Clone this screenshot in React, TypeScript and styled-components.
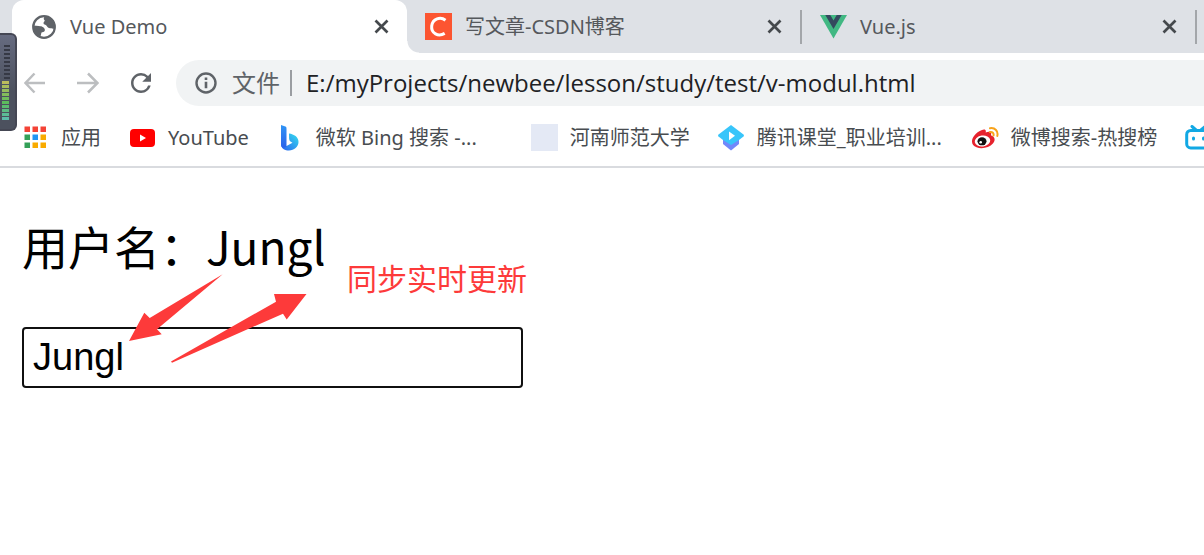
import React, { useState } from "react";
import styled, { createGlobalStyle, css } from "styled-components";
import { MdRefresh } from "react-icons/md";

const uiFont = '"Noto Sans", "Noto Sans CJK SC", sans-serif';
const cjkFont = '"Noto Sans CJK SC", sans-serif';

const GlobalStyle = createGlobalStyle`
  *, *::before, *::after { box-sizing: border-box; }
  body { margin: 0; background: #fff; color: #000; font-family: ${uiFont}; overflow: hidden; }
  button { border: 0; padding: 0; background: none; color: inherit; font: inherit; }
`;

const Browser = styled.div`
  position: relative;
  min-height: 100vh;
`;

const TabStrip = styled.header`
  display: flex;
  height: 53px;
  padding-left: 12px;
  background: #dee1e6;
`;

const Tab = styled.div<{ $active?: boolean }>`
  position: relative;
  flex: 1;
  min-width: 0;
  max-width: ${(p) => (p.$active ? "395px" : "393px")};
  display: flex;
  align-items: center;
  gap: 13px;
  padding: 0 18px;
  color: #55585c;
  ${(p) =>
    p.$active &&
    css`
      background: #fff;
      border-radius: 12px 12px 0 0;
      &::after {
        content: "";
        position: absolute;
        left: 100%;
        bottom: 0;
        width: 12px;
        height: 12px;
        background: radial-gradient(circle at 100% 0, transparent 11px, #fff 12px);
      }
    `}
`;

const TabTitle = styled.span`
  flex: 1;
  font-size: 20px;
  line-height: 28px;
  white-space: nowrap;
`;

const CloseButton = styled.button`
  display: flex;
  color: #45494d;
`;

const Divider = styled.span`
  align-self: center;
  width: 2px;
  height: 34px;
  background: #a3a6aa;
`;

const Toolbar = styled.nav`
  display: flex;
  align-items: center;
  height: 60px;
  padding-left: 20px;
`;

const NavButton = styled.button<{ $dim?: boolean }>`
  display: flex;
  justify-content: center;
  width: 30px;
  margin-right: 23px;
  color: ${(p) => (p.$dim ? "#bcbec0" : "#5f6368")};
`;

const Omnibox = styled.div`
  flex: 1;
  display: flex;
  align-items: center;
  height: 46px;
  margin-left: -3px;
  padding-left: 17px;
  border-radius: 23px 0 0 23px;
  background: #f1f3f4;
  color: #5f6368;
`;

const Scheme = styled.label`
  margin-left: 13px;
  padding-right: 10px;
  border-right: 2px solid #9a9da1;
  font-size: 24px;
  line-height: 26px;
`;

const Address = styled.input`
  flex: 1;
  min-width: 0;
  margin-left: 14px;
  padding: 0;
  border: 0;
  outline: 0;
  background: transparent;
  color: #202124;
  font: 24px/32px "Open Sans", ${uiFont};
`;

const Bookmarks = styled.nav`
  display: flex;
  align-items: center;
  gap: 28px;
  height: 55px;
  padding: 0 0 4px 22px;
  border-bottom: 2px solid #d9dbdf;
  overflow: hidden;
`;

const Bookmark = styled.a`
  display: flex;
  flex: none;
  align-items: center;
  gap: 12px;
  color: #484c50;
  font-size: 20px;
  line-height: 28px;
  white-space: nowrap;
  text-decoration: none;
`;

const BookmarkLabel = styled.span<{ $wide?: boolean }>`
  ${(p) => p.$wide && "width: 187px;"}
`;

const IconSlot = styled.span`
  display: flex;
  flex: none;
  justify-content: center;
  width: 27px;
`;

const BlankIcon = styled.span`
  width: 27px;
  height: 27px;
  background: #e4e9f5;
`;

const Page = styled.main`
  position: relative;
  padding: 43px 22px;
`;

const UserLine = styled.label`
  display: block;
  font: 46px/68px ${cjkFont};
`;

const UserInput = styled.input`
  display: block;
  width: 501px;
  max-width: 100%;
  height: 61px;
  margin-top: 48px;
  padding: 0 9px;
  border: 2px solid #101010;
  border-radius: 4px;
  outline: 0;
  color: #000;
  font: 38px "Liberation Sans", Arial, sans-serif;
`;

const Note = styled.span`
  position: absolute;
  left: 347px;
  top: 87px;
  color: #fd3a3a;
  font: 30px/44px ${cjkFont};
`;

const Arrows = styled.svg`
  position: absolute;
  left: 120px;
  top: 102px;
  pointer-events: none;
`;

const Meter = styled.aside`
  position: absolute;
  left: 0;
  top: 33px;
  width: 17px;
  height: 98px;
  border: solid #454754;
  border-width: 2px 2px 2px 0;
  border-radius: 0 6px 6px 0;
  background: linear-gradient(#666b80, #4c515e 60%);
`;

const levels = Array.from({ length: 19 }, (_, i) => i);

const MeterBars = () => (
  <svg width="15" height="94" viewBox="0 0 15 94">
    {levels.map((i) => (
      <rect
        key={i}
        x={i < 9 ? 4 : 2}
        y={10 + i * 4}
        width={i < 9 ? 6 : 7}
        height={i < 9 ? 2 : 3}
        fill={i < 9 ? "#363945" : `hsl(${60 + (i - 9) * 12}, 42%, 55%)`}
      />
    ))}
  </svg>
);

const Globe = () => (
  <svg width="24" height="24" viewBox="0 0 24 24">
    <circle cx="12" cy="12" r="10.8" fill="#fff" stroke="#5f6368" strokeWidth="2.2" />
    <path
      fill="#5f6368"
      d="M13 1.200c-1.500 1.300-1.600 3-.4 4 .8.700-1.300 1.500-1.100 3 .2 1.600 2.200 1.200 3.100 2.600.9 1.500 1.900 2.600 3.700 2.500 1.700-.1 2.500.8 4.800.4C23.800 7 19.500 1.200 13 1.200zM1.300 10.600l5.600.4c3.300.2 6 1.600 6 4 0 1.700-1.500 2-2.700 2.200-1.200.2-.9 1.500-1.200 2.600-.3 1.100-.5 1.700-1.500 1.800C3.600 19.600 1.300 15.800 1.300 10.600z"
    />
  </svg>
);

const CsdnIcon = () => (
  <svg width="27" height="27" viewBox="0 0 27 27">
    <path fill="#fc5531" d="M0 0h27v27H0z" />
    <path d="M20.500 7.200C15.500 3.500 7.600 5.500 6.700 13c-.8 7.500 6.600 11 13 7.400" fill="none" stroke="#fff" strokeWidth="3" />
  </svg>
);

const VueIcon = () => (
  <svg width="27" height="24" viewBox="0 0 27 24">
    <path fill="#41b883" d="M0 0h27L13.500 23.500z" />
    <path fill="#34495e" d="M5.300 0h5l3.200 5.500L16.700 0h5l-8.200 14z" />
  </svg>
);

const CloseIcon = () => (
  <svg width="15" height="15" viewBox="0 0 15 15" stroke="currentColor" strokeWidth="2.700">
    <path d="M1.500 1.500l12 12M13.500 1.500l-12 12" />
  </svg>
);

const ArrowIcon = ({ flip }: { flip?: boolean }) => (
  <svg width="22" height="22" viewBox="0 0 22 22" fill="none" stroke="currentColor" strokeWidth="2.500">
    <path d={flip ? "M0 11h20M11 1.500l9.500 9.500-9.500 9.500" : "M21 11H2M10.500 1.500L1.500 11l9 9.500"} />
  </svg>
);

const InfoIcon = () => (
  <svg width="26" height="26" viewBox="0 0 26 26" fill="none" stroke="currentColor">
    <circle cx="13" cy="13" r="9.500" strokeWidth="2.400" />
    <path d="M13 11.800v6.400M13 7.500v2.600" strokeWidth="2.600" />
  </svg>
);

const appColors = ["#f44336", "#f44336", "#f44336", "#34a058", "#2196f3", "#f9ab00", "#34a058", "#f9ab00", "#f9ab00"];

const AppsIcon = () => (
  <svg width="23" height="23" viewBox="0 0 23 23">
    {appColors.map((c, i) => (
      <rect key={i} x={(i % 3) * 8 + 0.5} y={Math.floor(i / 3) * 8 + 0.5} width="5.500" height="5.500" fill={c} />
    ))}
  </svg>
);

const YouTubeIcon = () => (
  <svg width="25" height="18" viewBox="0 0 25 18">
    <rect width="25" height="18" rx="4" fill="#f00" />
    <path fill="#fff" d="M10 5.500l6 3.500-6 3.500z" />
  </svg>
);

const BingIcon = () => (
  <svg width="18" height="26" viewBox="0 0 18 26">
    <defs>
      <linearGradient id="bingStem" x2="0" y2="1">
        <stop stopColor="#2f94f5" />
        <stop offset="1" stopColor="#2a62ea" />
      </linearGradient>
      <linearGradient id="bingBowl" y1="1" x2="1" y2="0">
        <stop stopColor="#2a62f0" />
        <stop offset="1" stopColor="#35dfee" />
      </linearGradient>
    </defs>
    <path
      fill="url(#bingBowl)"
      d="M8 8.500c5 .6 9.500 3.500 9.500 8.500 0 4.500-4.500 8.500-9.500 8.500-4 0-7.500-1.500-7.500-5l5 .5 6-3.300-2-1.200c-.8-.5-1.200-1.500-1.400-3z"
    />
    <path fill="url(#bingStem)" d="M0 0l4.300 1.600c1 .4 1.200 1 1.200 2v17.800c-2.500 2.200-5.500 1.400-5.500-1.400z" />
  </svg>
);

const TencentIcon = () => (
  <svg width="26" height="26" viewBox="0 0 26 26">
    <path fill="#7188fa" d="M5 14h16v5l-8 6.500L5 19z" />
    <path fill="#38c5fa" d="M13 0l12.500 9.500c.6.6.6 1.400 0 2L21 15l-8 5-8-5-4.500-3.500c-.6-.6-.6-1.400 0-2z" />
    <path fill="#fff" d="M11 6.500l6 4.300-6 4.400z" />
  </svg>
);

const WeiboIcon = () => (
  <svg width="27" height="22" viewBox="0 0 27 22">
    <path fill="#e6222d" d="M10 3c2-1 4.500-.7 3.700 2.400 3-1.200 6-.8 5.400 1.800-.2 1 0 1.300 1.300 1.800 2.700 1.400 3 4.600.5 7.500C17.500 20.500 10 22.500 4.500 20.300-1 18-1 13 2 9c2-3 5-5 8-6z" />
    <ellipse cx="10.500" cy="14" rx="7.800" ry="5.500" fill="#fff" transform="rotate(-8 10.500 14)" />
    <ellipse cx="10" cy="14.300" rx="4.500" ry="4" fill="#111" />
    <circle cx="8.700" cy="15.300" r="1.300" fill="#fff" />
    <path d="M18 1.200c5-.9 8.500 3 7.300 7.800M18 5c2.400-.4 4 1 3.500 3.500" fill="none" stroke="#f8a31b" strokeWidth="2" strokeLinecap="round" />
  </svg>
);

const BilibiliIcon = () => (
  <svg width="27" height="25" viewBox="0 0 27 25" fill="none" stroke="#12a8e4" strokeWidth="3" strokeLinecap="round">
    <rect x="1.700" y="5.400" width="23.600" height="17.500" rx="4" />
    <path d="M7 1.500l4 3.500M20 1.500L16 5M8.500 13v1M18.500 13v1" />
  </svg>
);

const tabs = [
  { title: "Vue Demo", icon: <Globe />, active: true },
  { title: "写文章-CSDN博客", icon: <CsdnIcon /> },
  { title: "Vue.js", icon: <VueIcon /> },
];

const bookmarks = [
  { label: "应用", icon: <AppsIcon /> },
  { label: "YouTube", icon: <YouTubeIcon /> },
  { label: "微软 Bing 搜索 -...", icon: <BingIcon />, wide: true },
  { label: "河南师范大学", icon: <BlankIcon /> },
  { label: "腾讯课堂_职业培训...", icon: <TencentIcon />, wide: true },
  { label: "微博搜索-热搜榜", icon: <WeiboIcon /> },
  { label: "", icon: <BilibiliIcon /> },
];

export default function App() {
  const [name, setName] = useState("Jungl");
  return (
    <Browser>
      <GlobalStyle />
      <TabStrip>
        {tabs.map((tab) => (
          <React.Fragment key={tab.title}>
            <Tab $active={tab.active}>
              <IconSlot>{tab.icon}</IconSlot>
              <TabTitle>{tab.title}</TabTitle>
              <CloseButton aria-label="Close tab">
                <CloseIcon />
              </CloseButton>
            </Tab>
            {!tab.active && <Divider />}
          </React.Fragment>
        ))}
      </TabStrip>
      <Toolbar>
        <NavButton $dim aria-label="Back">
          <ArrowIcon />
        </NavButton>
        <NavButton $dim aria-label="Forward">
          <ArrowIcon flip />
        </NavButton>
        <NavButton aria-label="Reload">
          <MdRefresh size={34} />
        </NavButton>
        <Omnibox>
          <InfoIcon />
          <Scheme htmlFor="address">文件</Scheme>
          <Address id="address" defaultValue="E:/myProjects/newbee/lesson/study/test/v-modul.html" />
        </Omnibox>
      </Toolbar>
      <Bookmarks>
        {bookmarks.map((b) => (
          <Bookmark href="#" key={b.label} aria-label={b.label || "bilibili"}>
            <IconSlot>{b.icon}</IconSlot>
            {b.label && <BookmarkLabel $wide={b.wide}>{b.label}</BookmarkLabel>}
          </Bookmark>
        ))}
      </Bookmarks>
      <Page>
        <UserLine htmlFor="username">用户名：{name}</UserLine>
        <UserInput id="username" value={name} onChange={(e) => setName(e.target.value)} />
        <Note>同步实时更新</Note>
        <Arrows width="190" height="96" viewBox="120 270 190 96" fill="#fd3a3a">
          <path d="M222.700 274.300L149.700 318l-5.400-5.300L129 341l32.700-6.700-4.700-5z" />
          <path d="M171 361.500L276 301.700l-2-7.700h32.500l-19.800 25.500-3.700-5.800-111 49z" />
        </Arrows>
      </Page>
      <Meter>
        <MeterBars />
      </Meter>
    </Browser>
  );
}
